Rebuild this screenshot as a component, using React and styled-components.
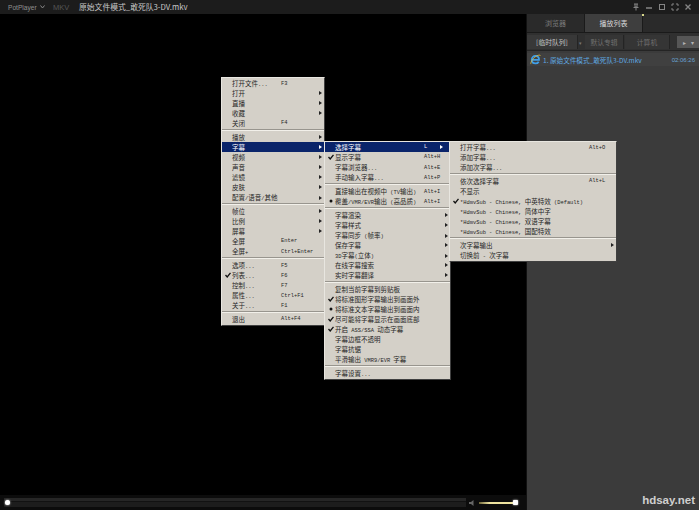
import React from 'react';
import styled, { createGlobalStyle } from 'styled-components';

const GlobalStyle = createGlobalStyle`
  html, body {
    margin: 0;
    padding: 0;
    background: #000;
    overflow: hidden;
  }
  body {
    font-family: "Noto Sans CJK SC", "Liberation Sans", sans-serif;
  }
`

const Player = styled.div`
  width: 699px;
  height: 510px;
  display: flex;
  flex-direction: column;
  position: relative;
  overflow: hidden;
`

const TitleBar = styled.div`
  height: 14px;
  flex: none;
  display: flex;
  align-items: center;
  background: #1c1c1c;
  color: #8d8d8d;
  font-size: 7px;
  padding-left: 8px;
`

const Brand = styled.span`
  font-family: "Liberation Sans", sans-serif;
  font-size: 6.6px;
  color: #909090;
  width: 29px;
`

const Caret = styled.svg`
  width: 5px;
  height: 4px;
  margin-left: 3px;
`

const Format = styled.span`
  font-family: "Liberation Sans", sans-serif;
  font-size: 7.5px;
  color: #555;
  margin-left: 8px;
  width: 26px;
`

const FileName = styled.span`
  color: #c8c8c8;
  font-size: 7.8px;
  line-height: 14px;
`

const WindowButtons = styled.div`
  margin-left: auto;
  display: flex;
  align-items: center;
  gap: 5px;
  padding-right: 7px;
`

const WindowIcon = styled.svg`
  width: 8px;
  height: 8px;
  stroke: #858585;
  fill: none;
  stroke-width: 1;
`

const Body = styled.div`
  flex: 1;
  display: flex;
  min-height: 0;
`

const Stage = styled.div`
  flex: 1;
  display: flex;
  flex-direction: column;
  min-width: 0;
`

const Video = styled.div`
  flex: 1;
  background: #000;
`

const Controls = styled.div`
  height: 15px;
  flex: none;
  background: #0c0c0c;
  display: flex;
  align-items: center;
  padding: 0 8px 0 4px;
  gap: 2px;
`

const SeekTrack = styled.div`
  flex: 1;
  height: 9px;
  background: linear-gradient(#262626 0 3px, #121212 3px 4px, #1d1d1d 4px);
  position: relative;
`

const Knob = styled.div`
  width: 5px;
  height: 5px;
  border-radius: 50%;
  background: #fff;
  box-shadow: 0 0 2px #fff;
  flex: none;
`

const SeekKnob = styled(Knob)`
  position: absolute;
  left: 1px;
  top: 2px;
`

const VolumeIcon = styled.svg`
  width: 8px;
  height: 8px;
  flex: none;
`

const VolumeLine = styled.div`
  width: 35px;
  height: 2px;
  margin-left: 1px;
  background: linear-gradient(90deg, #6d6538, #efe4a0 30%);
  flex: none;
`

const VolumeKnob = styled(Knob)`
  margin-left: -3px;
  border-radius: 1px;
`

const SidePanel = styled.aside`
  width: 173px;
  flex: none;
  background: #3b3b3b;
  display: flex;
  flex-direction: column;
  border-left: 1px solid #111;
  box-sizing: border-box;
  position: relative;
`

const TopTabs = styled.div`
  display: flex;
  height: 18px;
  background: #2a2a2a;
  border-bottom: 1px solid #1a1a1a;
`

const TopTab = styled.div`
  width: 57px;
  display: flex;
  align-items: center;
  justify-content: center;
  font-size: 7px;
  color: ${props => props.$active ? '#d8d8d8' : '#7d7d7d'};
  background: ${props => props.$active ? '#3e3e3e' : '#2a2a2a'};
  border-right: 1px solid #1a1a1a;
  position: relative;
`

const TabSpark = styled.i`
  position: absolute;
  right: -2px;
  top: 0;
  width: 2px;
  height: 2px;
  background: #d6d68a;
`

const QueueTabs = styled.div`
  display: flex;
  align-items: center;
  height: 16px;
  padding-top: 1px;
  background: #303030;
  border-bottom: 1px solid #242424;
  gap: 1px;
`

const QueueTab = styled.div`
  width: ${props => props.$width}px;
  height: 14px;
  display: flex;
  align-items: center;
  justify-content: center;
  font-size: 6.8px;
  color: ${props => props.$active ? '#c4c4c4' : '#707070'};
  background: ${props => props.$active ? '#383838' : '#353535'};
  border-right: 1px solid #242424;
`

const QueueArrow = styled.div`
  width: 5px;
  color: #777;
  font-size: 5px;
`

const QueueMenu = styled.div`
  margin-left: 6px;
  width: 22px;
  height: 12px;
  background: #565656;
  color: #b4b4b4;
  font-size: 6px;
  display: flex;
  align-items: center;
  justify-content: center;
  gap: 5px;
`

const Track = styled.div`
  display: flex;
  align-items: center;
  height: 13px;
  margin-top: 2px;
  padding: 0 4px 0 3px;
  background: #404040;
  font-size: 6.6px;
  color: #5fa8e0;
`

const TrackIcon = styled.svg`
  width: 11px;
  height: 11px;
  flex: none;
  margin-right: 2px;
`

const TrackName = styled.span`
  white-space: nowrap;
`

const TrackTime = styled.span`
  margin-left: auto;
  font-family: "Liberation Sans", sans-serif;
  font-size: 6px;
  color: #6aa3d4;
  white-space: nowrap;
`

const Watermark = styled.div`
  position: absolute;
  right: 4px;
  bottom: 4px;
  font-family: "Liberation Sans", sans-serif;
  font-weight: bold;
  font-size: 11.5px;
  color: #cfcfcf;
`

const Menu = styled.div`
  position: absolute;
  left: ${props => props.$left}px;
  top: ${props => props.$top}px;
  width: ${props => props.$width}px;
  box-sizing: border-box;
  padding: 0 0 1px;
  background: #d4d0c8;
  border: 1px solid;
  border-color: #e8e6e0 #404040 #404040 #e8e6e0;
  color: #262626;
`

const Row = styled.div`
  height: 10px;
  display: grid;
  grid-template-columns: ${props => props.$labelWidth}px 1fr 5px;
  align-items: center;
  padding-left: 10px;
  position: relative;
  font-size: 6.5px;
  line-height: 10px;
  white-space: nowrap;
  color: ${props => props.$selected ? '#fff' : 'inherit'};
  background: ${props => props.$selected ? '#0a246a' : 'transparent'};
`

const Label = styled.span`
  overflow: visible;
`

const Latin = styled.span`
  font-family: "Liberation Mono", monospace;
  font-size: 5.4px;
`

const Shortcut = styled.span`
  font-family: "Liberation Mono", monospace;
  font-size: 5.4px;
`

const Arrow = styled.i`
  width: 0;
  height: 0;
  margin-left: ${props => props.$back ? '-5px' : '0'};
  border-left: 3px solid ${props => props.$selected ? '#fff' : '#222'};
  border-top: 2px solid transparent;
  border-bottom: 2px solid transparent;
`

const Mark = styled.svg`
  position: absolute;
  left: 3px;
  top: 2px;
  width: 6px;
  height: 6px;
`

const Separator = styled.div`
  height: 4px;
  display: flex;
  align-items: center;
  &::before {
    content: '';
    display: block;
    width: 100%;
    height: 1px;
    background: #98958e;
    border-bottom: 1px solid #f2f0ea;
  }
`

const mainMenu = [
  { t: '打开文件...', s: 'F3' },
  { t: '打开', a: 1 },
  { t: '直播', a: 1 },
  { t: '收藏', a: 1 },
  { t: '关闭', s: 'F4' },
  null,
  { t: '播放', a: 1 },
  { t: '字幕', a: 1, sel: 1 },
  { t: '视频', a: 1 },
  { t: '声音', a: 1 },
  { t: '滤镜', a: 1 },
  { t: '皮肤', a: 1 },
  { t: '配置/语音/其他', a: 1 },
  null,
  { t: '帧位', a: 1 },
  { t: '比例', a: 1 },
  { t: '屏幕', a: 1 },
  { t: '全屏', s: 'Enter' },
  { t: '全屏+', s: 'Ctrl+Enter' },
  null,
  { t: '选项...', s: 'F5' },
  { t: '列表...', s: 'F6', m: 'check' },
  { t: '控制...', s: 'F7' },
  { t: '属性...', s: 'Ctrl+F1' },
  { t: '关于...', s: 'F1' },
  null,
  { t: '退出', s: 'Alt+F4' },
]

const subtitleMenu = [
  { t: '选择字幕', s: 'L', a: 1, sel: 1, back: 1 },
  { t: '显示字幕', s: 'Alt+H', m: 'check' },
  { t: '字幕浏览器...', s: 'Alt+E' },
  { t: '手动输入字幕...', s: 'Alt+P' },
  null,
  { t: '直接输出在视频中 (TV输出)', s: 'Alt+I' },
  { t: '覆盖/VMR/EVR输出 (高品质)', s: 'Alt+I', m: 'dot' },
  null,
  { t: '字幕渲染', a: 1 },
  { t: '字幕样式', a: 1 },
  { t: '字幕同步 (帧率)', a: 1 },
  { t: '保存字幕', a: 1 },
  { t: '3D字幕(立体)', a: 1 },
  { t: '在线字幕搜索', a: 1 },
  { t: '实时字幕翻译', a: 1 },
  null,
  { t: '复制当前字幕到剪贴板' },
  { t: '将标准图形字幕输出到画面外', m: 'check' },
  { t: '将标准文本字幕输出到画面内', m: 'dot' },
  { t: '尽可能将字幕显示在画面底部', m: 'check' },
  { t: '开启 ASS/SSA 动态字幕', m: 'check' },
  { t: '字幕边框不透明' },
  { t: '字幕抗锯' },
  { t: '平滑输出 VMR9/EVR 字幕' },
  null,
  { t: '字幕设置...' },
]

const selectMenu = [
  { t: '打开字幕...', s: 'Alt+O' },
  { t: '添加字幕...' },
  { t: '添加次字幕...' },
  null,
  { t: '依次选择字幕', s: 'Alt+L' },
  { t: '不显示' },
  { t: '*HdmvSub - Chinese, 中英特效 (Default)', m: 'check' },
  { t: '*HdmvSub - Chinese, 简体中字' },
  { t: '*HdmvSub - Chinese, 双语字幕' },
  { t: '*HdmvSub - Chinese, 国配特效' },
  null,
  { t: '次字幕输出', a: 1 },
  { t: '切换前 - 次字幕' },
]

// ascii runs are half width in the original menu font
const splitLatin = text =>
  text.split(/([\x20-\x7e]+)/).map((part, i) =>
    i % 2 ? <Latin key={i}>{part}</Latin> : part
  )

const ItemMark = ({ kind }) => (
  <Mark viewBox="0 0 6 6">
    {kind === 'check'
      ? <path d="M0.5 3 L2.2 5 L5.5 0.8" fill="none" stroke="#111" strokeWidth="1.3" />
      : <circle cx="3" cy="3" r="1.5" fill="#111" />}
  </Mark>
)

const PopupMenu = ({ items, left, top, width, labelWidth }) => (
  <Menu $left={left} $top={top} $width={width}>
    {items.map((item, i) => item === null ? <Separator key={i} /> : (
      <Row key={i} $labelWidth={labelWidth} $selected={item.sel}>
        {item.m && <ItemMark kind={item.m} />}
        <Label>{splitLatin(item.t)}</Label>
        <Shortcut>{item.s}</Shortcut>
        {item.a ? <Arrow $selected={item.sel} $back={item.back} /> : <span />}
      </Row>
    ))}
  </Menu>
)

const App = () => {
  return (
    <Player>
      <GlobalStyle />
      <TitleBar>
        <Brand>PotPlayer</Brand>
        <Caret viewBox="0 0 5 4"><path d="M0.5 0.5 L2.5 3 L4.5 0.5" fill="none" stroke="#888" /></Caret>
        <Format>MKV</Format>
        <FileName>原始文件模式_敢死队3-DV.mkv</FileName>
        <WindowButtons>
          <WindowIcon viewBox="0 0 8 8"><path d="M2 1 H6 M3 1 V4 H5 V1 M1.5 4.5 H6.5 M4 4.5 V7.5" /></WindowIcon>
          <WindowIcon viewBox="0 0 8 8"><path d="M1 5 H7" strokeWidth="1.5" /></WindowIcon>
          <WindowIcon viewBox="0 0 8 8"><rect x="1.5" y="1.5" width="5" height="5" /></WindowIcon>
          <WindowIcon viewBox="0 0 8 8"><path d="M1 3 V1 H3 M5 1 H7 V3 M7 5 V7 H5 M3 7 H1 V5" /></WindowIcon>
          <WindowIcon viewBox="0 0 8 8"><path d="M1.5 1.5 L6.5 6.5 M6.5 1.5 L1.5 6.5" strokeWidth="1.3" /></WindowIcon>
        </WindowButtons>
      </TitleBar>
      <Body>
        <Stage>
          <Video />
          <Controls>
            <SeekTrack><SeekKnob /></SeekTrack>
            <VolumeIcon viewBox="0 0 8 8"><path d="M1 3 H3 L5.5 1 V7 L3 5 H1 Z" fill="#666" /></VolumeIcon>
            <VolumeLine />
            <VolumeKnob />
          </Controls>
        </Stage>
        <SidePanel>
          <TopTabs>
            <TopTab>浏览器</TopTab>
            <TopTab $active>播放列表<TabSpark /></TopTab>
          </TopTabs>
          <QueueTabs>
            <QueueTab $width={50} $active>[临时队列]</QueueTab>
            <QueueArrow>▾</QueueArrow>
            <QueueTab $width={38}>默认专辑</QueueTab>
            <QueueTab $width={44}>计算机</QueueTab>
            <QueueMenu><span>▸</span><span>▾</span></QueueMenu>
          </QueueTabs>
          <Track>
            <TrackIcon viewBox="0 0 10 10">
              <path d="M2 5.4 H8.2 C8.4 3 6.8 1.8 5 1.8 C3 1.8 1.6 3.4 1.6 5.3 C1.6 7.3 3 8.6 5 8.6 C6.3 8.6 7.3 8 7.9 7" fill="none" stroke="#3f9fe8" strokeWidth="1.6" />
              <path d="M0.8 9.2 C0.2 7.6 3 3.4 6 1.8 C8 0.8 9.4 0.6 9.4 1.8" fill="none" stroke="#e8c23a" strokeWidth="0.7" />
            </TrackIcon>
            <TrackName>1. 原始文件模式_敢死队3-DV.mkv</TrackName>
            <TrackTime>02:06:26</TrackTime>
          </Track>
          <Watermark>hdsay.net</Watermark>
        </SidePanel>
      </Body>
      <PopupMenu items={mainMenu} left={221} top={77} width={104} labelWidth={49} />
      <PopupMenu items={subtitleMenu} left={324} top={141} width={127} labelWidth={89} />
      <PopupMenu items={selectMenu} left={449} top={141} width={168} labelWidth={129} />
    </Player>
  )
}

export default App
